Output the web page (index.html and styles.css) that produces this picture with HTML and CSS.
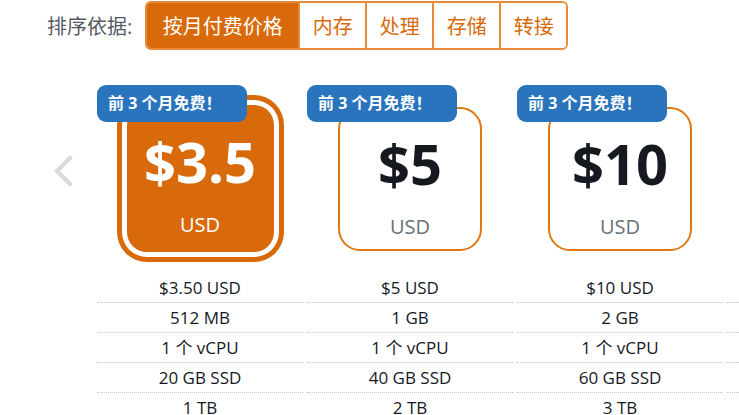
FILE: index.html
```html
<!DOCTYPE html>
<html lang="zh-CN">
<head>
  <meta charset="UTF-8" />
  <meta name="viewport" content="width=device-width, initial-scale=1.0"/>
  <title>套餐价格</title>
  <link rel="stylesheet" href="styles.css">
</head>
<body>

  <!-- 排序 -->
  <div class="orden">
    <span class="orden-label">排序依据:</span>
    <div class="tabs">
      <button class="tab activo">按月付费价格</button>
      <button class="tab">内存</button>
      <button class="tab">处理</button>
      <button class="tab">存储</button>
      <button class="tab">转接</button>
    </div>
  </div>

  <!-- 套餐 -->
  <div class="carrusel">
    <button class="flecha" title="上一个">
      <svg width="20" height="32" viewBox="0 0 20 32"><path d="M17 3 L4 16 L17 29" fill="none" stroke="#d5dbdb" stroke-width="4.5" stroke-linecap="round" stroke-linejoin="round"/></svg>
    </button>

    <div class="planes">
      <div class="plan">
        <div class="plan-top">
          <span class="oferta">前 3 个月免费！</span>
          <div class="precio seleccionado">
            <span class="monto">$3.5</span>
            <span class="moneda">USD</span>
          </div>
        </div>
        <div class="fila">$3.50 USD</div>
        <div class="fila">512 MB</div>
        <div class="fila">1 个 vCPU</div>
        <div class="fila">20 GB SSD</div>
        <div class="fila">1 TB</div>
      </div>

      <div class="plan">
        <div class="plan-top">
          <span class="oferta">前 3 个月免费！</span>
          <div class="precio">
            <span class="monto">$5</span>
            <span class="moneda">USD</span>
          </div>
        </div>
        <div class="fila">$5 USD</div>
        <div class="fila">1 GB</div>
        <div class="fila">1 个 vCPU</div>
        <div class="fila">40 GB SSD</div>
        <div class="fila">2 TB</div>
      </div>

      <div class="plan">
        <div class="plan-top">
          <span class="oferta">前 3 个月免费！</span>
          <div class="precio">
            <span class="monto">$10</span>
            <span class="moneda">USD</span>
          </div>
        </div>
        <div class="fila">$10 USD</div>
        <div class="fila">2 GB</div>
        <div class="fila">1 个 vCPU</div>
        <div class="fila">60 GB SSD</div>
        <div class="fila">3 TB</div>
      </div>

      <!-- siguiente plan, fuera de la vista -->
      <div class="plan">
        <div class="plan-top"></div>
        <div class="fila"></div>
        <div class="fila"></div>
        <div class="fila"></div>
        <div class="fila"></div>
        <div class="fila"></div>
      </div>
    </div>
  </div>

</body>
</html>
```

FILE: styles.css
```css
body {
  margin: 0;
  font-family: "Open Sans", "Noto Sans CJK SC", sans-serif;
  background-color: #fff;
  color: #16191f;
  overflow: hidden;
  width: 739px;
  height: 415px;
}

.orden {
  display: flex;
  align-items: center;
  padding: 1px 0 0 47px;
  height: 49px;
}

.orden-label {
  font-size: 20px;
  color: #545b64;
  margin-right: 13px;
}

.tabs {
  display: flex;
  height: 49px;
  border: 2px solid #e58b3a;
  border-radius: 6px;
  box-sizing: border-box;
  overflow: hidden;
}

.tab {
  font-family: inherit;
  font-size: 20px;
  color: #d86a0b;
  background-color: #fff;
  border: none;
  border-left: 2px solid #e58b3a;
  padding: 0 11px;
  width: 67px;
  cursor: pointer;
}

.tab.activo {
  background-color: #d86a0b;
  color: #fff;
  border-left: none;
  width: 151px;
}

.carrusel {
  position: relative;
  padding-top: 13px;
  overflow: hidden;
}

.flecha {
  position: absolute;
  left: 53px;
  top: 105px;
  background: none;
  border: none;
  padding: 0;
  cursor: pointer;
}

.planes {
  display: flex;
  margin-left: 95px;
}

.plan {
  flex: 0 0 210px;
}

.plan-top {
  position: relative;
  height: 210px;
  box-sizing: border-box;
  padding-top: 44px;
  display: flex;
  justify-content: center;
  align-items: flex-start;
}

.oferta {
  position: absolute;
  left: 2px;
  top: 22px;
  width: 150px;
  height: 37px;
  box-sizing: border-box;
  padding-left: 11px;
  line-height: 37px;
  font-size: 16px;
  font-weight: bold;
  color: #fff;
  background-color: #2a74bd;
  border-radius: 9px;
  z-index: 2;
  white-space: nowrap;
}

.precio {
  width: 144px;
  height: 144px;
  box-sizing: border-box;
  border: 2px solid #e07712;
  border-radius: 22px;
  display: flex;
  flex-direction: column;
  align-items: center;
}

.monto {
  font-size: 56px;
  font-weight: bold;
  line-height: 1;
  margin-top: 26px;
}

.moneda {
  font-size: 20px;
  color: #687078;
  margin-top: 22px;
}

.precio.seleccionado {
  width: 147px;
  height: 147px;
  margin-top: -2px;
  border: none;
  background-color: #d86a0b;
  color: #fff;
  box-shadow: 0 0 0 5px #fff, 0 0 0 10px #d86a0b;
  border-radius: 20px;
}

.precio.seleccionado .monto {
  margin-top: 28px;
}

.precio.seleccionado .moneda {
  color: #fff;
}

.fila {
  margin: 0 2px;
  height: 30px;
  line-height: 30px;
  text-align: center;
  font-size: 17px;
  border-bottom: 1px dotted #c4c4c4;
  box-sizing: border-box;
}
```
